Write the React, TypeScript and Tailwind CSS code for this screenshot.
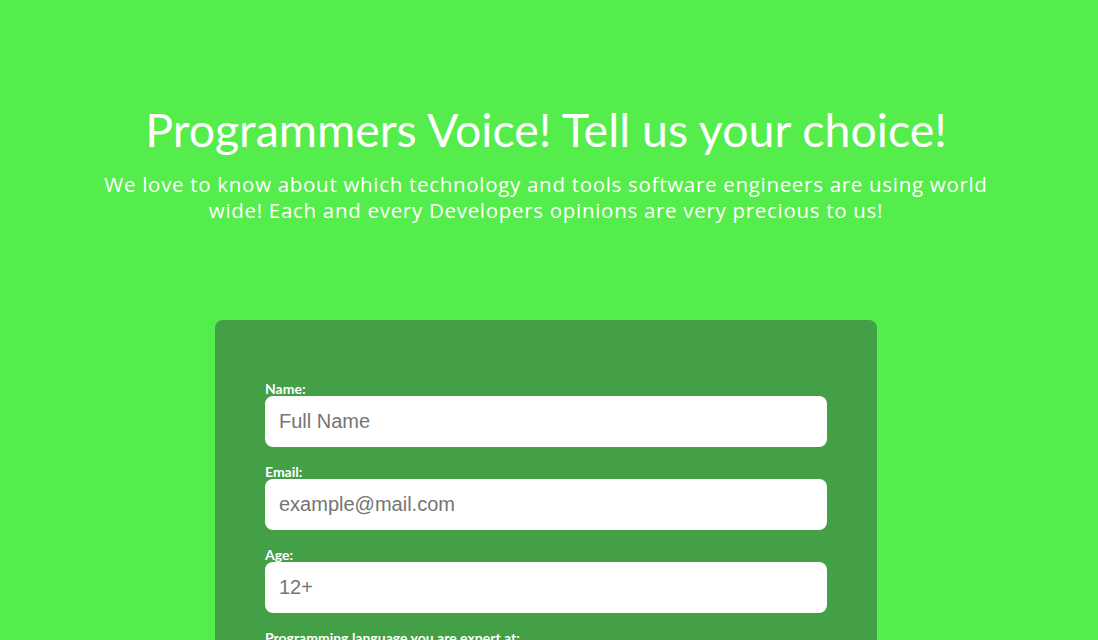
const fields = [
  { label: "Name:", placeholder: "Full Name", type: "text" },
  { label: "Email:", placeholder: "example@mail.com", type: "email" },
  { label: "Age:", placeholder: "12+", type: "number" },
];

const App = () => {
  return (
    <div className="min-h-screen bg-[#55ed4b] pr-[6px] text-white font-['Lato',sans-serif]">
      <header className="pt-[97px] text-center">
        <h1 className="text-[46.5px] leading-[64px] font-normal">
          Programmers Voice! Tell us your choice!
        </h1>
        <p className="mx-auto mt-[10px] w-[950px] text-[20.5px] leading-[26px] tracking-[0.7px] font-normal font-['Open_Sans',sans-serif]">
          We love to know about which technology and tools software engineers are using world
          <br />
          wide! Each and every Developers opinions are very precious to us!
        </p>
      </header>

      <main className="mx-auto mt-[97px] w-[662px] rounded-lg bg-[#43a047] px-[50px] pt-[62px] pb-10">
        <form className="flex flex-col">
          {fields.map((f) => (
            <div key={f.label} className="mb-[18px] flex flex-col">
              <label className="text-[14px] leading-[14px] font-bold">{f.label}</label>
              <input
                type={f.type}
                placeholder={f.placeholder}
                className="h-[51px] w-full rounded-lg bg-white px-[14px] text-[20px] text-gray-800 placeholder:text-[#757575] font-['Liberation_Sans',Arial,sans-serif] outline-none"
              />
            </div>
          ))}
          <label className="text-[14px] leading-[14px] font-bold">
            Programming language you are expert at:
          </label>
        </form>
      </main>
    </div>
  );
};

export default App;
